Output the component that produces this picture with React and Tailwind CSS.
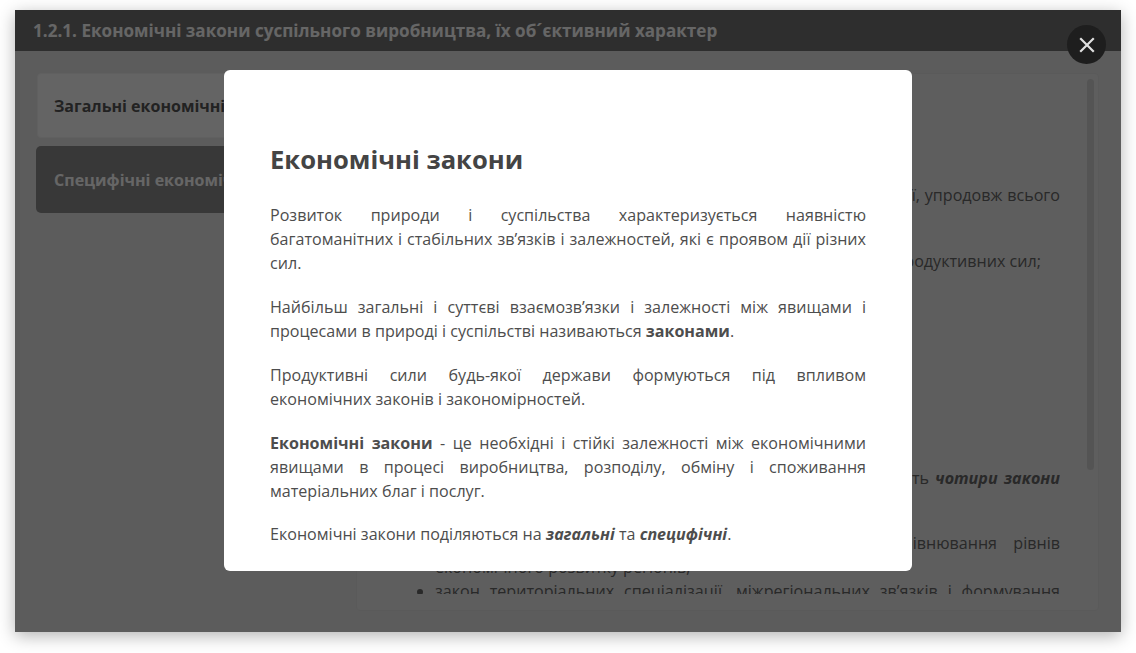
import React from "react";

function Card({ dark, children }) {
  return (
    <div className={dark
      ? "-ml-[1px] flex h-[67px] items-center rounded-[5px] bg-[#8c8c8c] px-[18px] text-[16px] font-bold text-white"
      : "flex h-[65px] items-center rounded-[4px] border border-[#f0f0f0] bg-[#fafafa] px-[16px] text-[16px] font-bold text-[#555]"}>
      <span className="whitespace-nowrap">{children}</span>
    </div>
  );
}

export default function App() {
  return (
    <div className="h-[653px] w-[1136px] overflow-hidden bg-white pb-[21px] pl-[15px] pr-[15px] pt-[10px] font-['Open_Sans',sans-serif]">
      <div className="relative flex h-full flex-col overflow-hidden bg-[#e6e6e6] shadow-[0_4px_16px_rgba(0,0,0,0.3)]">
        <div className="flex h-[41px] shrink-0 items-center bg-[#737373] px-[18px] pt-[1px] text-[17.1px] font-bold text-white">
          1.2.1. Економічні закони суспільного виробництва, їх об´єктивний характер
        </div>
        <div className="flex min-h-0 flex-1 gap-[14px] pl-[22px] pr-[22px] pt-[22px]">
          <div className="flex w-[305px] shrink-0 flex-col gap-[8px]">
            <Card>Загальні економічні закони</Card>
            <Card dark>Специфічні економічні закони</Card>
          </div>
          <div className="relative h-[538px] flex-1 rounded-[4px] border border-[#e2e2e2] bg-[#ebebeb] pl-[21px] pr-[38px]">
            <div className="h-[520px] overflow-hidden text-[16.1px] leading-6 text-[#666]">
              <p className="mt-[109px] text-justify">
                Економічні закони виробництва діють у кожній суспільній формації, упродовж всього історичного розвитку суспільства.
              </p>
              <ul className="mt-[18px] list-disc pl-[57px]">
                <li className="text-justify">закон відповідності виробничих відносин рівню розвитку продуктивних сил;</li>
              </ul>
              <p className="mt-[193px] text-justify">
                У системі законів просторового розміщення сил науковці виділяють <b><i>чотири закони</i></b> розміщення виробництва:
              </p>
              <ul className="mt-[17px] list-disc pl-[57px]">
                <li className="text-justify">закон раціонального розміщення виробництва і вирівнювання рівнів економічного розвитку регіонів;</li>
                <li className="text-justify">закон територіальних спеціалізації, міжрегіональних зв’язків і формування господарських комплексів;</li>
              </ul>
            </div>
            <div className="absolute right-[4px] top-[5px] h-[391px] w-[7px] rounded-full bg-[#d2d2d2]" />
          </div>
        </div>

        <div className="absolute inset-0 flex items-center justify-center bg-black/60 pb-[1px]">
          <div className="h-[501px] w-[688px] overflow-hidden rounded-[6px] bg-white px-[46px] pt-[72px] text-[16.1px] leading-6 text-[#4d4d4d]">
            <h2 className="mb-[25px] text-[25.6px] font-bold leading-9 text-[#444]">Економічні закони</h2>
            <p className="mb-[20px] text-justify">Розвиток природи і суспільства характеризується наявністю багатоманітних і стабільних зв’язків і залежностей, які є проявом дії різних сил.</p>
            <p className="mb-[20px] text-justify">Найбільш загальні і суттєві взаємозв’язки і залежності між явищами і процесами в природі і суспільстві називаються <b>законами</b>.</p>
            <p className="mb-[20px] text-justify">Продуктивні сили будь-якої держави формуються під впливом економічних законів і закономірностей.</p>
            <p className="mb-[19px] text-justify"><b>Економічні закони</b> - це необхідні і стійкі залежності між економічними явищами в процесі виробництва, розподілу, обміну і споживання матеріальних благ і послуг.</p>
            <p className="text-justify">Економічні закони поділяються на <b><i>загальні</i></b> та <b><i>специфічні</i></b>.</p>
          </div>
          <button className="absolute right-[15px] top-[15px] flex h-[39px] w-[39px] items-center justify-center rounded-full bg-[#1e1e1e]">
            <svg width="16" height="16" viewBox="0 0 16 16" fill="none" stroke="#e0e0e0" strokeWidth="2.2" strokeLinecap="square">
              <path d="M2 2 L14 14 M14 2 L2 14" />
            </svg>
          </button>
        </div>
      </div>
    </div>
  );
}
